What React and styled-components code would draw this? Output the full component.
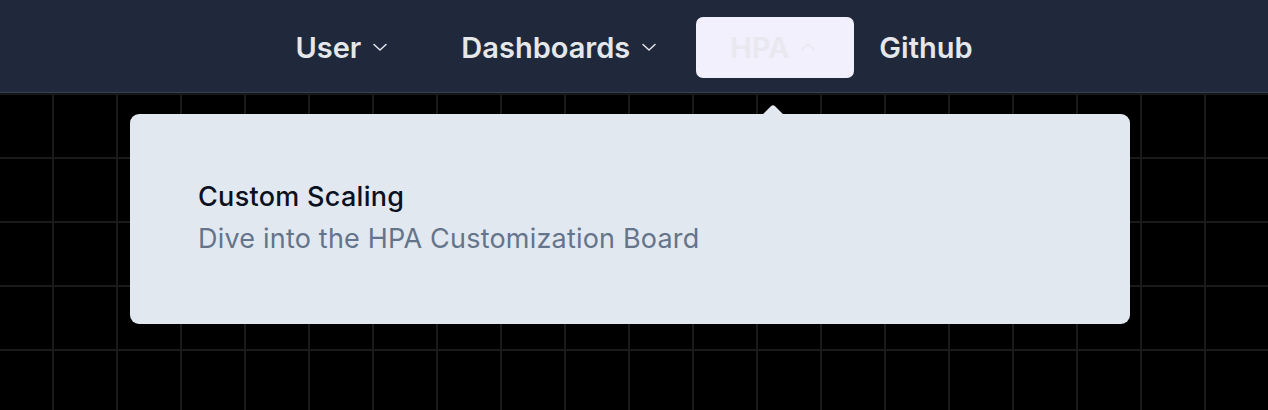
import React from "react";
import styled, { createGlobalStyle } from "styled-components";

const GlobalStyle = createGlobalStyle`
  html, body {
    margin: 0;
    padding: 0;
    height: 100%;
  }
  body {
    font-family: Inter, "Noto Sans", "Liberation Sans", sans-serif;
    background-color: #000;
    background-image:
      linear-gradient(to right, #1a1a1a 2px, transparent 2px),
      linear-gradient(to bottom, #1a1a1a 2px, transparent 2px);
    background-size: 64px 64px;
    background-position: 52px 93px;
    overflow: hidden;
  }
`;

const Page = styled.div`
  position: relative;
  width: 1268px;
  height: 410px;
`;

const NavBar = styled.nav`
  height: 92px;
  background: #1f293b;
  border-bottom: 1px solid #364152;
  display: flex;
  justify-content: center;
  align-items: center;
  box-shadow: 0 1px 0 #111;
`;

const NavList = styled.ul`
  list-style: none;
  margin: 0;
  padding: 0;
  display: flex;
  align-items: center;
  gap: 1px;
  transform: translateX(-5px);
`;

const NavItem = styled.li`
  display: flex;
  align-items: center;
  gap: 11px;
  height: 61px;
  padding: ${(p) => (p.$link ? "0 24px" : "0 38px 0 34px")};
  border-radius: 7px;
  font-size: 29px;
  font-weight: 600;
  color: ${(p) => (p.$active ? "#e9e8ee" : "#e5e7eb")};
  background: ${(p) => (p.$active ? "#f1f0fc" : "transparent")};
  cursor: pointer;
  transform: translateY(1px);
`;

const Chevron = ({ up }) => (
  <svg width="16" height="16" viewBox="0 0 16 16" fill="none">
    <path
      d={up ? "M2 10.5 L8 5 L14 10.5" : "M2 5.5 L8 11 L14 5.5"}
      stroke="currentColor"
      strokeWidth="1.5"
      strokeLinecap="round"
      strokeLinejoin="round"
    />
  </svg>
);

const Dropdown = styled.div`
  position: absolute;
  top: 114px;
  left: 130px;
  width: 1000px;
  height: 210px;
  box-sizing: border-box;
  padding: 68px 68px;
  background: #e2e8f0;
  border-radius: 9px;
`;

const Arrow = styled.div`
  position: absolute;
  top: -7px;
  left: 636px;
  width: 14px;
  height: 14px;
  background: #e2e8f0;
  border-top-left-radius: 3px;
  transform: rotate(45deg);
`;

const LinkTitle = styled.div`
  font-size: 27px;
  font-weight: 500;
  color: #0b1120;
  line-height: 30px;
  letter-spacing: 0.3px;
`;

const LinkText = styled.div`
  margin-top: 12px;
  font-size: 27px;
  font-weight: 400;
  color: #64748b;
  line-height: 30px;
  letter-spacing: 0.2px;
`;

export default function App() {
  return (
    <Page>
      <GlobalStyle />
      <NavBar>
        <NavList>
          <NavItem>
            User <Chevron />
          </NavItem>
          <NavItem>
            Dashboards <Chevron />
          </NavItem>
          <NavItem $active>
            HPA <Chevron up />
          </NavItem>
          <NavItem $link>Github</NavItem>
        </NavList>
      </NavBar>
      <Dropdown>
        <Arrow />
        <LinkTitle>Custom Scaling</LinkTitle>
        <LinkText>Dive into the HPA Customization Board</LinkText>
      </Dropdown>
    </Page>
  );
}
